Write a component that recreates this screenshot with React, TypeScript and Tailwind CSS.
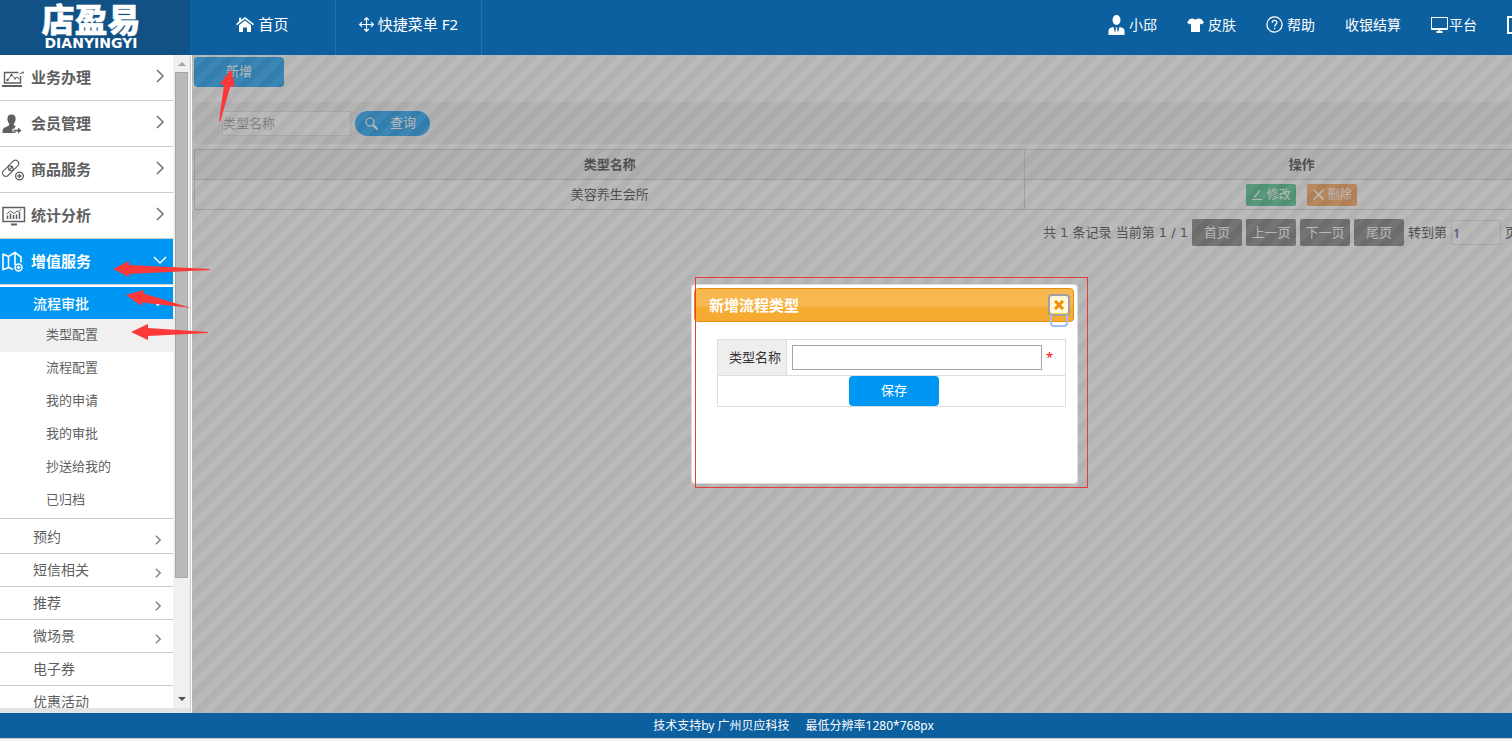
import React, { useState } from 'react';

type MenuIcon = React.FC;

const Logo = () => (
  <svg width="104" height="55" viewBox="0 0 104 55" fill="#fff" aria-hidden="true">
    <text x="52" y="32" fontSize="33" fontWeight="900" stroke="#fff" strokeWidth=".5" textAnchor="middle">
      店盈易
    </text>
    <text
      x="52"
      y="48"
      fontSize="14"
      fontWeight="700"
      textAnchor="middle"
      className="font-['DejaVu_Sans']"
    >
      DIANYINGYI
    </text>
  </svg>
);

const BusinessIcon: MenuIcon = () => (
  <svg width="22" height="20" viewBox="0 0 22 20" fill="none" stroke="#5f5f5f">
    <path d="M18.500 8v7h-16V4.500h14" strokeWidth="1.400" />
    <path d="M5.500 12.500l4-5.500 3.500 3.500 2.500-1.500 1.500 2.500" strokeWidth="1" />
    <path d="M17.500 6l3-1.500" strokeWidth="1" />
    <circle cx="21" cy="4.500" r="1" fill="#5f5f5f" stroke="none" />
    <circle cx="9.500" cy="7" r="1.200" fill="#5f5f5f" stroke="none" />
    <circle cx="5.500" cy="12" r="1.200" fill="#5f5f5f" stroke="none" />
    <circle cx="13" cy="10.500" r="1" fill="#5f5f5f" stroke="none" />
    <path d="M0 18h20" strokeWidth="2" />
  </svg>
);

const MemberIcon: MenuIcon = () => (
  <svg width="20" height="20" viewBox="0 0 20 20" fill="#5f5f5f">
    <path d="M9.500 0.500c3 0 4.300 2 4.100 4.500-.1 2-.8 3.500-1.800 4.700v1.600l2.200 1.200c-1 .5-1.600 1.300-1.600 2.300h-2v3h3v1.200H.5c0-4.500 1-5 3-5.800l3.700-1.900V9.700C6.200 8.500 5.500 7 5.400 5 5.200 2.500 6.500.5 9.500.5z" />
    <path d="M11.500 15.800h4.500v-2.300l3.500 3.100-3.500 3.100v-2.300h-4.500z" />
  </svg>
);

const GoodsIcon: MenuIcon = () => (
  <svg width="22" height="22" viewBox="0 0 22 22" fill="none" stroke="#5f5f5f" strokeWidth="1.100">
    <rect x="5.500" y="3.200" width="12" height="6.500" rx="3.200" transform="rotate(-45 11.500 6.500)" />
    <rect x="-.2" y="9" width="12" height="6.500" rx="3.200" transform="rotate(-45 5.800 12.200)" />
    <path d="M6.500 11.500l4.500-4.500" />
    <circle cx="17.500" cy="17" r="3.900" strokeWidth="1.300" />
    <path d="M17.500 14.800v4.400M15.300 17h4.400" strokeWidth="1.400" />
  </svg>
);

const StatsIcon: MenuIcon = () => (
  <svg width="24" height="20" viewBox="0 0 24 20" fill="none" stroke="#5f5f5f">
    <rect x="1" y="1.500" width="21.500" height="14" strokeWidth="1.500" />
    <path d="M5.500 13V9.500M8.500 13V7.500M11.500 13V9M14.500 13V8.500M17.500 13V6" strokeWidth="1.500" />
    <path d="M4.500 8l4-3 3.500 2.500 3-2.500 1.500.5L19 3.500" strokeWidth="1" />
    <path d="M9 18.500h6" strokeWidth="2" />
  </svg>
);

const ServiceIcon: MenuIcon = () => (
  <svg width="22" height="22" viewBox="0 0 22 22" fill="none" stroke="#fff" strokeWidth="1.600" strokeLinejoin="round">
    <path d="M6.500 16.500L1 18.800V3l5.500 2.500zM6.500 5.500l6.500-4v12.500M6.500 16.500l4.500 1.800M13 1.500l6 4.500v5.500" />
    <circle cx="16.500" cy="16.500" r="3.500" />
    <path d="M16.500 14.700v3.600M14.700 16.500h3.600" />
  </svg>
);

const Chevron = ({ down = false, small = false }) => (
  <svg
    width={small ? 10 : 14}
    height={small ? 10 : 14}
    viewBox="0 0 14 14"
    fill="none"
    stroke="currentColor"
    strokeWidth={small ? 2.2 : 1.5}
  >
    <path d={down ? 'M1 4l6 6 6-6' : 'M4 1l6 6-6 6'} />
  </svg>
);

const HomeIcon = () => (
  <svg width="18" height="16" viewBox="0 0 18 16" fill="#fff">
    <path d="M9 0l9 7-1 1.300-8-6.200-8 6.200L0 7l3-2.400V.8h2.200v2.100z" />
    <path d="M9 3.500l6 4.700V15h-4v-4.500H7V15H3V8.200z" />
  </svg>
);

const MoveIcon = () => (
  <svg width="15" height="15" viewBox="0 0 15 15" fill="none" stroke="#fff" strokeWidth="1.200">
    <path d="M7.500 1v13M1 7.500h13M5.200 3l2.300-2.300L9.800 3M5.200 12l2.300 2.300L9.800 12M3 5.200L.7 7.500 3 9.800M12 5.200l2.300 2.300L12 9.800" />
  </svg>
);

const UserIcon = () => (
  <svg width="17" height="20" viewBox="0 0 17 20" fill="#fff">
    <ellipse cx="8.500" cy="5" rx="4" ry="5" />
    <path d="M.5 20v-4c0-2 1-3 3-3.500l2-.5 1.500 5.500L8 14l-.5-1.500h2L9 14l1 3.500 1.500-5.500 2 .5c2 .5 3 1.500 3 3.500v4z" />
  </svg>
);

const ShirtIcon = () => (
  <svg width="17" height="14" viewBox="0 0 17 14" fill="#fff">
    <path d="M5.500.3c1 1.500 5 1.500 6 0l3 .9L17 4.500l-2.600 2-1.400-1V14H4V5.500l-1.400 1L0 4.500l2.500-3.300z" />
  </svg>
);

const HelpIcon = () => (
  <svg width="17" height="17" viewBox="0 0 17 17" fill="none" stroke="#fff" strokeWidth="1.300">
    <circle cx="8.500" cy="8.500" r="7.600" />
    <path d="M6.200 6.700c0-3 4.700-3 4.700-.2 0 1.600-2.300 1.900-2.300 4" />
    <path d="M8.600 11.800v1.500" />
  </svg>
);

const MonitorIcon = () => (
  <svg width="18" height="16" viewBox="0 0 18 16" fill="none" stroke="#fff">
    <rect x=".5" y=".5" width="16" height="11.500" />
    <path d="M.5 12h16M8.500 12v2.500M5.500 15h6" strokeWidth="1.800" />
  </svg>
);

const mainMenu: { label: string; Icon: MenuIcon }[] = [
  { label: '业务办理', Icon: BusinessIcon },
  { label: '会员管理', Icon: MemberIcon },
  { label: '商品服务', Icon: GoodsIcon },
  { label: '统计分析', Icon: StatsIcon },
];

const flowMenu = ['类型配置', '流程配置', '我的申请', '我的审批', '抄送给我的', '已归档'];

const subMenu = [
  { label: '预约', more: true },
  { label: '短信相关', more: true },
  { label: '推荐', more: true },
  { label: '微场景', more: true },
  { label: '电子券', more: false },
  { label: '优惠活动', more: false },
];

const Header = () => (
  <header className="flex h-[55px] shrink-0 bg-[#0d60a0] text-white">
    <a
      href="#"
      aria-label="店盈易"
      className="flex w-[190px] shrink-0 justify-center bg-[#115185] pr-2"
    >
      <Logo />
    </a>
    <nav className="flex text-[15px]">
      <a
        href="#"
        className="flex w-[146px] items-center justify-center gap-1 border-r border-[#2470ab] pb-1.5"
      >
        <HomeIcon />
        首页
      </a>
      <a
        href="#"
        className="flex w-[146px] items-center justify-center gap-1 border-r border-[#2470ab] pb-1.5"
      >
        <MoveIcon />
        快捷菜单 F2
      </a>
    </nav>
    <div className="ml-auto flex items-center gap-[30px] pr-[54px] pb-1.5 text-[14px]">
      <a href="#" className="flex items-center gap-1">
        <UserIcon />
        小邱
      </a>
      <a href="#" className="flex items-center gap-1">
        <ShirtIcon />
        皮肤
      </a>
      <a href="#" className="flex items-center gap-1">
        <HelpIcon />
        帮助
      </a>
      <a href="#">收银结算</a>
      <a href="#" className="flex items-center">
        <MonitorIcon />
        平台
      </a>
      <a href="#" aria-label="全屏" className="size-[18px] border-2 border-white" />
    </div>
  </header>
);

const Sidebar = () => (
  <aside className="flex w-[190px] shrink-0 flex-col">
    <div className="flex min-h-0 flex-1">
      <nav className="w-[173px] overflow-hidden text-[#5f5f5f]">
        {mainMenu.map(({ label, Icon }) => (
          <a
            key={label}
            href="#"
            className="flex h-[46px] items-center border-b border-[#ccc] pr-1.5 pl-0.5 text-[15px] font-bold"
          >
            <span className="flex w-[29px] items-center">
              <Icon />
            </span>
            {label}
            <span className="ml-auto pb-1 text-[#707078]">
              <Chevron />
            </span>
          </a>
        ))}
        <a
          href="#"
          className="flex h-[45px] items-center bg-[#0096f3] pr-1.5 pl-0.5 text-[15px] font-bold text-white"
        >
          <span className="flex w-[29px] items-center">
            <ServiceIcon />
          </span>
          增值服务
          <span className="ml-auto pb-1">
            <Chevron down />
          </span>
        </a>
        <div className="border-t border-[#ccc] pt-0.5">
          <a
            href="#"
            className="flex h-8 items-center justify-between bg-[#0096f3] pr-2.5 pl-[33px] text-[14px] font-medium text-white"
          >
            流程审批
            <Chevron down small />
          </a>
          <div className="border-b border-[#ccc] pb-px">
            {flowMenu.map((label, i) => (
              <a
                key={label}
                href="#"
                className={`flex h-[33px] items-center pb-0.5 pl-[46px] text-[13px] ${i === 0 ? 'bg-[#f0f0f0]' : ''}`}
              >
                {label}
              </a>
            ))}
          </div>
          <div className="pt-0.5">
            {subMenu.map(({ label, more }) => (
              <a
                key={label}
                href="#"
                className="flex h-[33px] items-center justify-between border-b border-[#ccc] pr-2.5 pb-0.5 pl-[33px] text-[14px]"
              >
                {label}
                {more && (
                  <span className="pt-2 text-[#888]">
                    <Chevron small />
                  </span>
                )}
              </a>
            ))}
          </div>
        </div>
      </nav>
      <div className="flex flex-1 flex-col items-center bg-[#f0f0f0]">
        <svg className="h-[17px] w-2 shrink-0" viewBox="0 0 8 17" fill="#a3a3a3">
          <path d="M0 11l4-4 4 4z" />
        </svg>
        <div className="w-[13px] flex-[506] border border-[#a6a6a6] bg-[#bababa]" />
        <div className="flex-[113]" />
        <svg className="h-[17px] w-2 shrink-0" viewBox="0 0 8 17" fill="#505050">
          <path d="M0 6l4 4 4-4z" />
        </svg>
      </div>
    </div>
    <div className="h-[5px] bg-[#e3e3e3]" />
  </aside>
);

const pagerButton = 'h-[27px] w-[50px] rounded-[2px] bg-[#727272] text-[13px] text-white';

const Content = () => (
  <div className="pt-0.5 pl-[3px] text-[13px] text-[#333]">
    <button type="button" className="block h-[30px] w-[90px] rounded bg-[#0096f3] text-white">
      新增
    </button>

    <form
      className="mt-[15px] flex h-[42px] items-center gap-1 rounded bg-[#f0f0f0] pl-7"
      onSubmit={e => e.preventDefault()}
    >
      <input
        type="text"
        aria-label="类型名称"
        placeholder="类型名称"
        className="h-[25px] w-[129px] border border-[#ddd] bg-white placeholder:text-[#999]"
      />
      <button
        type="submit"
        className="flex h-[25px] w-[75px] items-center gap-3 rounded-full bg-[#0096f3] pl-2.5 text-white"
      >
        <svg width="13" height="13" viewBox="0 0 13 13" fill="none" stroke="#fff">
          <circle cx="5" cy="5" r="4" strokeWidth="1.200" />
          <path d="M8 8l4.500 4.500" strokeWidth="2" />
        </svg>
        查询
      </button>
    </form>

    <table className="mt-[5px] w-full table-fixed border-collapse text-center">
      <thead>
        <tr className="h-[30px] bg-[#f0f0f0]">
          <th className="w-3/5 border border-[#ccc] p-0 font-bold">类型名称</th>
          <th className="w-2/5 border border-[#ccc] p-0 font-bold">操作</th>
        </tr>
      </thead>
      <tbody>
        <tr className="h-[30px]">
          <td className="border border-[#ccc] p-0">美容养生会所</td>
          <td className="border border-[#ccc] p-0">
            <div className="flex justify-center gap-[11px]">
              <button
                type="button"
                className="flex h-[22px] w-[50px] items-center justify-center gap-1 rounded-[2px] bg-[#3cbc80] text-[12px] text-white"
              >
                <svg width="11" height="11" viewBox="0 0 11 11" fill="none" stroke="#fff">
                  <path d="M0 10.500h10" />
                  <path d="M2 8.500l6-7" strokeWidth="1.500" />
                </svg>
                修改
              </button>
              <button
                type="button"
                className="flex h-[22px] w-[50px] items-center justify-center gap-1 rounded-[2px] bg-[#fc9846] text-[12px] text-white"
              >
                <svg width="11" height="11" viewBox="0 0 11 11" fill="none" stroke="#fff" strokeWidth="1.700">
                  <path d="M.5.5l10 10M10.500.5l-10 10" />
                </svg>
                删除
              </button>
            </div>
          </td>
        </tr>
      </tbody>
    </table>

    <div className="mt-[9px] flex items-center justify-end gap-1 pr-[61px]">
      <span className="font-['DejaVu_Sans','Noto_Sans_CJK_SC',sans-serif]">
        共 1 条记录 当前第 1 / 1
      </span>
      <button type="button" className={pagerButton}>首页</button>
      <button type="button" className={pagerButton}>上一页</button>
      <button type="button" className={pagerButton}>下一页</button>
      <button type="button" className={pagerButton}>尾页</button>
      <label htmlFor="page">转到第</label>
      <input
        id="page"
        type="text"
        defaultValue="1"
        className="h-[25px] w-[50px] border border-[#ddd] bg-white px-px text-[#408]"
      />
      <span>页</span>
    </div>
  </div>
);

const FlowTypeDialog = () => {
  const [name, setName] = useState('');

  return (
    <div
      role="dialog"
      aria-labelledby="dialog-title"
      className="relative h-[200px] w-[387px] rounded border border-[#ddd] bg-white p-[3px] pl-0.5"
    >
      <div className="flex h-[34px] items-center justify-between rounded border border-[#e78f08] bg-linear-to-b from-[#f8b850] from-50% to-[#f6ab30] to-60% pr-[3px] pl-3.5">
        <h2 id="dialog-title" className="text-[15px] font-bold text-white">
          新增流程类型
        </h2>
        <button
          type="button"
          aria-label="关闭"
          className="flex size-[22px] items-center justify-center rounded border-2 border-[#a0a0a0] bg-[#fff7d8] shadow-[inset_0_-1px_0_#fbd850]"
        >
          <svg width="10" height="10" viewBox="0 0 10 10" stroke="#ef8c08" strokeWidth="3">
            <path d="M1 1l8 8M9 1l-8 8" />
          </svg>
        </button>
      </div>
      <div className="absolute top-[30px] right-[9px] h-3 w-[18px] rounded-b border-2 border-t-0 border-[#a0c0f8]" />

      <form className="pt-[17px] pr-2 pl-[23px]" onSubmit={e => e.preventDefault()}>
        <table className="w-full border-collapse text-[13px] text-[#333]">
          <tbody>
            <tr className="h-9">
              <th className="w-[69px] border border-[#ddd] bg-[#eee] p-0 pr-[5px] text-right font-normal">
                <label htmlFor="typeName">类型名称</label>
              </th>
              <td className="border border-[#ddd] p-0 pl-[5px]">
                <div className="flex items-center gap-1">
                  <input
                    id="typeName"
                    type="text"
                    className="h-[25px] w-[250px] border border-[#a5a5a5] bg-white px-1"
                    value={name}
                    onChange={e => setName(e.target.value)}
                  />
                  <span className="text-[#f00]">*</span>
                </div>
              </td>
            </tr>
            <tr>
              <td colSpan={2} className="border border-[#ddd] p-0 pl-[5px]">
                <button
                  type="submit"
                  className="mx-auto block h-[30px] w-[90px] rounded bg-[#0096f3] text-white"
                >
                  保存
                </button>
              </td>
            </tr>
          </tbody>
        </table>
      </form>
      <div className="pointer-events-none absolute -top-2 left-[3px] h-[211px] w-[393px] border border-[#e83c3c]" />
    </div>
  );
};

// Red guide arrows that show the click order
const GuideArrows = () => (
  <svg className="pointer-events-none absolute inset-0 h-full w-full" fill="#fd3838">
    <path d="M231 69l4 18-4.500-1L220 122l-1-1 5-36-4-1z" />
    <path d="M113 269l16-8v4l81 4v1l-81 4v3z" />
    <path d="M126 295l18-5-.5 3.500L191 308l-49-5.500-.5 3.500z" />
    <path d="M131 332l17-8v4l60 4v1l-60 3v4z" />
  </svg>
);

const App: React.FC = () => {
  return (
    <div className="h-screen overflow-hidden font-['Noto_Sans','Noto_Sans_CJK_SC',sans-serif]">
      <div className="relative flex h-full min-w-[1579px] flex-col bg-[#f5f5f5]">
        <Header />
        <div className="flex min-h-0 flex-1 bg-white">
          <Sidebar />
          <main className="relative min-w-0 flex-1 border-l border-[#ccc]">
            <Content />
            <div className="absolute inset-0 left-px bg-[linear-gradient(135deg,#656565_25%,#757575_25%,#757575_50%,#656565_50%,#656565_75%,#757575_75%)] bg-size-[20px_20px] bg-position-[-3px_0] opacity-50" />
            <div className="absolute inset-0 flex items-center justify-center pr-px">
              <FlowTypeDialog />
            </div>
          </main>
        </div>
        <footer className="flex h-[25px] shrink-0 items-center justify-center gap-4 bg-[#0d60a0] pl-2 text-[12px] text-white">
          <span>技术支持by 广州贝应科技</span>
          <span>最低分辨率1280*768px</span>
        </footer>
        <div className="h-[3px] shrink-0 border-t border-[#ccc]" />
        <GuideArrows />
      </div>
    </div>
  );
};

export default App;
